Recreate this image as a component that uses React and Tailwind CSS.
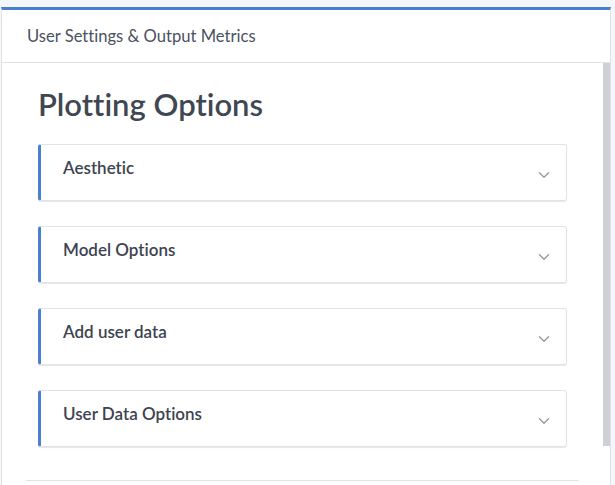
import React from "react";

const items = ["Aesthetic", "Model Options", "Add user data", "User Data Options"];

function Chevron() {
  return (
    <svg width="18" height="18" viewBox="0 0 24 24" fill="none" stroke="#8a96a8" strokeWidth="1.6" strokeLinecap="round" strokeLinejoin="round">
      <path d="m6 9 6 6 6-6" />
    </svg>
  );
}

export default function App() {
  return (
    <div className="h-[485px] overflow-hidden bg-[#f4f6f9] pt-[7px] pl-[1px] pr-[4px] [font-variant-ligatures:none]" style={{ fontFamily: "Lato, 'Noto Sans', sans-serif" }}>
      <div className="flex h-[520px] flex-col border border-[#dfe3e8] border-t-[3px] border-t-[#4a7fcf] bg-white">
        <div className="flex h-[53px] shrink-0 items-center border-b border-[#e0e4e9] px-[25px] text-[16.6px] text-[#4a5260]">
          User Settings &amp; Output Metrics
        </div>
        <div className="flex h-[421px] overflow-hidden">
          <div className="min-w-0 flex-1">
            <div className="px-[24px] pb-[46px] pt-[23px]">
              <div className="px-[12px]">
                <h2 className="text-[31px] font-semibold leading-[36px] text-[#3f4753]">Plotting Options</h2>
                <div className="mt-[22px] flex flex-col gap-[25px]">
                  {items.map((t) => (
                    <div
                      key={t}
                      className="flex h-[57px] items-start justify-between rounded-[3px] border border-[#e0e4ea] border-l-[3px] border-l-[#4a7fd2] pl-[22px] pr-[13px] shadow-[0_1px_1px_rgba(0,0,0,0.1)]"
                    >
                      <span className="pt-[11px] text-[17px] font-semibold leading-[24px] text-[#3d4350]">{t}</span>
                      <span className="pt-[21px]"><Chevron /></span>
                    </div>
                  ))}
                </div>
                <div className="mt-[33px] -mx-[12px] border-t border-[#e0e4ea]" />
              </div>
            </div>
          </div>
          <div className="w-[7px] shrink-0 bg-white">
            <div className="h-[383px] bg-[#cdd1d6]" />
          </div>
        </div>
      </div>
    </div>
  );
}
